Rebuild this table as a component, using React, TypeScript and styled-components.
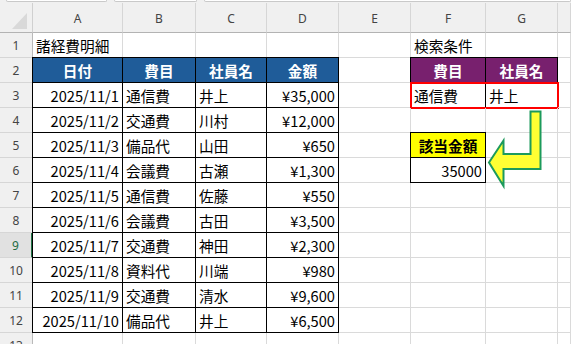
import React from "react";
import styled, { createGlobalStyle, css } from "styled-components";

const GlobalStyle = createGlobalStyle`
  html, body { margin: 0; padding: 0; background: #ffffff; overflow: hidden; }
  * { box-sizing: border-box; }
`;

const COLS = "33px 90px 73px 71px 72px 72px 75px 72px 1fr";
const GRID = "#dadada";
const HEAD_BG = "#f0f0f0";
const CELL_FONT = `"Noto Sans CJK JP", "Noto Sans", sans-serif`;
const UI_FONT = `"Noto Sans", "Liberation Sans", sans-serif`;

const Sheet = styled.div`
  position: relative;
  width: 571px;
  height: 344px;
  overflow: hidden;
  background: #ffffff;
  font-family: ${CELL_FONT};
`;

const TopStrip = styled.div`
  height: 3px;
  background: ${HEAD_BG};
  display: flex;
  gap: 7px;
  padding-left: 6px;
  overflow: hidden;
`;

const FormulaBox = styled.div<{ $w: number }>`
  flex: ${(p) => (p.$w ? `0 0 ${p.$w}px` : "1 1 auto")};
  height: 2px;
  background: #ffffff;
  border: 1px solid #c9c9c9;
  border-top: none;
  border-radius: 0 0 4px 4px;
`;

const Row = styled.div<{ $h: number }>`
  display: grid;
  grid-template-columns: ${COLS};
  height: ${(p) => p.$h}px;
`;

const Corner = styled.div`
  position: relative;
  background: ${HEAD_BG};
  border-right: 1px solid #d0d0d0;
  border-bottom: 1px solid #b3b3b3;
  display: flex;
  align-items: flex-end;
  justify-content: flex-end;
  padding: 0 5px 3px 0;
`;

const SelectAll = styled.div`
  width: 15px;
  height: 16px;
  background: #d9d9d9;
  clip-path: polygon(100% 0, 100% 100%, 0 100%);
`;

const ColHead = styled.div`
  background: ${HEAD_BG};
  border-right: 1px solid #d6d6d6;
  border-bottom: 1px solid #b3b3b3;
  display: flex;
  align-items: center;
  justify-content: center;
  font-family: ${UI_FONT};
  font-size: 12px;
  color: #444444;
  padding-top: 1px;
`;

const RowHead = styled.div<{ $active?: boolean }>`
  background: ${(p) => (p.$active ? "#e1e1e1" : HEAD_BG)};
  border-right: 1px solid #b9b9b9;
  border-bottom: 1px solid #d6d6d6;
  display: flex;
  align-items: center;
  justify-content: center;
  font-family: ${UI_FONT};
  font-size: 12px;
  color: ${(p) => (p.$active ? "#1d6b42" : "#444444")};
  padding-top: 1px;
  ${(p) =>
    p.$active &&
    css`
      border-right: 2px solid #217346;
    `}
`;

type CellProps = {
  $align?: "left" | "right" | "center";
  $bg?: string;
  $bold?: boolean;
  $color?: string;
  $boxed?: boolean;
  $edgeL?: boolean;
  $edgeT?: boolean;
};

const Cell = styled.div<CellProps>`
  display: flex;
  align-items: center;
  justify-content: ${(p) =>
    p.$align === "right" ? "flex-end" : p.$align === "center" ? "center" : "flex-start"};
  padding: 1px 3px 0 3px;
  white-space: nowrap;
  overflow: visible;
  font-size: 14.67px;
  font-weight: ${(p) => (p.$bold ? 700 : 400)};
  color: ${(p) => p.$color || "#000000"};
  background: ${(p) => p.$bg || "transparent"};
  border-right: 1px solid ${(p) => (p.$boxed ? "#000000" : GRID)};
  border-bottom: 1px solid ${(p) => (p.$boxed ? "#000000" : GRID)};
  box-shadow: ${(p) => {
    const s: string[] = [];
    if (p.$edgeL) s.push("-1px 0 0 #000000");
    if (p.$edgeT) s.push("0 -1px 0 #000000");
    if (p.$edgeL && p.$edgeT) s.push("-1px -1px 0 #000000");
    return s.length ? s.join(", ") : "none";
  }};
`;

const CriteriaPair = styled.div`
  grid-column: span 2;
  display: grid;
  grid-template-columns: 75px 72px;
  outline: 2px solid #ff0000;
  outline-offset: -1px;
`;

const Arrow = styled.svg`
  position: absolute;
  left: 486px;
  top: 108px;
  width: 58px;
  height: 82px;
  overflow: visible;
`;

const BLUE = "#1f5c99";
const PURPLE = "#78206e";

const rows = [
  ["2025/11/1", "通信費", "井上", "¥35,000"],
  ["2025/11/2", "交通費", "川村", "¥12,000"],
  ["2025/11/3", "備品代", "山田", "¥650"],
  ["2025/11/4", "会議費", "古瀬", "¥1,300"],
  ["2025/11/5", "通信費", "佐藤", "¥550"],
  ["2025/11/6", "会議費", "古田", "¥3,500"],
  ["2025/11/7", "交通費", "神田", "¥2,300"],
  ["2025/11/8", "資料代", "川端", "¥980"],
  ["2025/11/9", "交通費", "清水", "¥9,600"],
  ["2025/11/10", "備品代", "井上", "¥6,500"],
];

const Blank = () => <Cell />;

function rightSide(rowNo: number) {
  if (rowNo === 3) {
    return (
      <CriteriaPair key="fg">
        <Cell $boxed>通信費</Cell>
        <Cell $boxed>井上</Cell>
      </CriteriaPair>
    );
  }
  if (rowNo === 5) {
    return [
      <Cell key="f" $boxed $edgeL $edgeT $bg="#ffff00" $bold $align="center">
        該当金額
      </Cell>,
      <Blank key="g" />,
    ];
  }
  if (rowNo === 6) {
    return [
      <Cell key="f" $boxed $edgeL $align="right">
        35000
      </Cell>,
      <Blank key="g" />,
    ];
  }
  return [<Blank key="f" />, <Blank key="g" />];
}

export default function App() {
  return (
    <>
      <GlobalStyle />
      <Sheet>
        <TopStrip>
          <FormulaBox $w={101} />
          <FormulaBox $w={83} />
          <FormulaBox $w={0} />
        </TopStrip>
        <Row $h={30}>
          <Corner>
            <SelectAll />
          </Corner>
          {["A", "B", "C", "D", "E", "F", "G", ""].map((c, i) => (
            <ColHead key={i}>{c}</ColHead>
          ))}
        </Row>

        <Row $h={25}>
          <RowHead>1</RowHead>
          <Cell>諸経費明細</Cell>
          <Blank />
          <Blank />
          <Blank />
          <Blank />
          <Cell>検索条件</Cell>
          <Blank />
          <Blank />
        </Row>

        <Row $h={25}>
          <RowHead>2</RowHead>
          <Cell $boxed $edgeL $edgeT $bg={BLUE} $color="#ffffff" $bold $align="center">
            日付
          </Cell>
          <Cell $boxed $edgeT $bg={BLUE} $color="#ffffff" $bold $align="center">
            費目
          </Cell>
          <Cell $boxed $edgeT $bg={BLUE} $color="#ffffff" $bold $align="center">
            社員名
          </Cell>
          <Cell $boxed $edgeT $bg={BLUE} $color="#ffffff" $bold $align="center">
            金額
          </Cell>
          <Blank />
          <Cell $boxed $edgeL $edgeT $bg={PURPLE} $color="#ffffff" $bold $align="center">
            費目
          </Cell>
          <Cell $boxed $edgeT $bg={PURPLE} $color="#ffffff" $bold $align="center">
            社員名
          </Cell>
          <Blank />
        </Row>

        {rows.map((r, i) => {
          const rowNo = i + 3;
          return (
            <Row $h={25} key={rowNo}>
              <RowHead $active={rowNo === 9}>{rowNo}</RowHead>
              <Cell $boxed $edgeL $align="right">
                {r[0]}
              </Cell>
              <Cell $boxed>{r[1]}</Cell>
              <Cell $boxed>{r[2]}</Cell>
              <Cell $boxed $align="right">
                {r[3]}
              </Cell>
              <Blank />
              {rightSide(rowNo)}
              <Blank />
            </Row>
          );
        })}

        <Row $h={25}>
          <RowHead>13</RowHead>
          <Blank />
          <Blank />
          <Blank />
          <Blank />
          <Blank />
          <Blank />
          <Blank />
          <Blank />
        </Row>

        <Arrow viewBox="0 0 58 82">
          <polygon
            points="44.5,3.5 54.5,3.5 54.5,61 17.5,61 17.5,78 3,54.5 17.5,32.5 17.5,46 44.5,46"
            fill="#ffff33"
            stroke="#1c9a5c"
            strokeWidth="2"
            strokeLinejoin="miter"
          />
        </Arrow>
      </Sheet>
    </>
  );
}
